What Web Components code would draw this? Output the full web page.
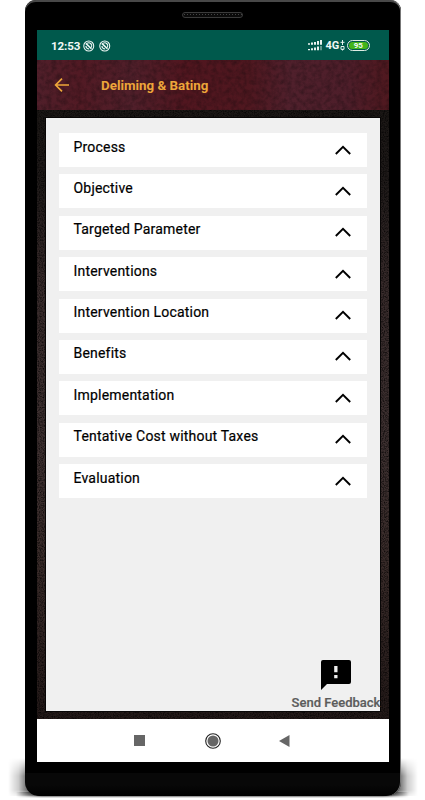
<!DOCTYPE html>
<html lang="en">
<head>
<meta charset="utf-8">
<title>Deliming &amp; Bating</title>
<style>
html,body{margin:0;height:800px;overflow:hidden;background:#fff;font-family:Roboto,"Liberation Sans",sans-serif}
</style>
</head>
<body>
<phone-frame>
  <status-bar time="12:53" battery="95"></status-bar>
  <app-bar>Deliming &amp; Bating</app-bar>
  <leather-panel>
    <topic-row>Process</topic-row>
    <topic-row>Objective</topic-row>
    <topic-row>Targeted Parameter</topic-row>
    <topic-row>Interventions</topic-row>
    <topic-row>Intervention Location</topic-row>
    <topic-row>Benefits</topic-row>
    <topic-row>Implementation</topic-row>
    <topic-row>Tentative Cost without Taxes</topic-row>
    <topic-row>Evaluation</topic-row>
    <feedback-button slot="action">Send Feedback</feedback-button>
  </leather-panel>
  <nav-bar></nav-bar>
</phone-frame>
<script>
const define = (name, html) => customElements.define(name, class extends HTMLElement {
  constructor() {
    super();
    this.attachShadow({mode: 'open'}).innerHTML =
      html.replace(/\{(\w+)\}/g, (_, key) => this.getAttribute(key) || '');
  }
});

define('phone-frame', `<style>
:host{display:block;position:relative;width:425px;height:800px;overflow:hidden}
.shade{position:absolute;top:758px;width:30px;height:38px;-webkit-mask:linear-gradient(#0000,#000 18px,#000 32px,#0004)}
.left{left:5px;background:linear-gradient(90deg,#0000 10%,#0003 45%,#0008 70%,#000)}
.right{left:391px;background:linear-gradient(270deg,#0000 10%,#0003 45%,#0008 70%,#000)}
.edge{position:absolute;left:16px;right:16px;top:792px;height:5.5px;background:linear-gradient(#111,#333 50%,#999 75%,#fff);-webkit-mask:linear-gradient(90deg,#0000,#000 26px,#000 calc(100% - 26px),#0000)}
.body{position:relative;box-sizing:border-box;margin-left:25px;width:375.5px;height:795.5px;padding:30px 11.5px 33.5px 12px;background:linear-gradient(#000 0 773px,#080808 773px 785px,#000);border-radius:11px 11px 14px 14px;box-shadow:inset -1px 0 #777,inset 0 2px #484848;display:flex;flex-direction:column}
.speaker{position:absolute;left:157px;top:12px;width:61px;height:6px;box-sizing:border-box;border:1px solid #3b3b3b;border-radius:3px;background:radial-gradient(circle,#444 0 .8px,#0a0a0a 1px) 0 0/3px 3px}
.screen{flex:1;display:flex;flex-direction:column;overflow:hidden}
</style><div class="shade left"></div><div class="shade right"></div><div class="edge"></div><div class="body"><div class="speaker"></div><div class="screen"><slot></slot></div></div>`);

define('status-bar', `<style>
:host{display:flex;align-items:center;box-sizing:border-box;height:29.5px;padding:2px 19.5px 0 14px;background:#00594c;color:#f1f8f6;font-weight:700}
.time{font-size:11.6px;letter-spacing:-.1px;line-height:14px;width:29.5px}
svg{display:block;flex:none}
.a{margin-left:2.5px}.b{margin-left:4.5px}
.sig{margin-left:auto}
.net{font-size:11px;letter-spacing:-.2px;margin-left:3.5px;line-height:14px}
.arrows{margin-left:.5px}
.bat{box-sizing:border-box;width:22.5px;height:11px;margin-left:2.5px;border:1px solid #dfece4;border-radius:6px;padding:1px}
.bat span{display:block;height:7px;border-radius:4px;background:#43b51b;font-size:8px;line-height:7.5px;text-align:center}
</style><span class="time">{time}</span>
<svg class="a" width="11.5" height="12" viewBox="0 0 12 12"><g fill="none" stroke="#f1f8f6"><circle cx="6" cy="6" r="5.2" stroke-width="1.1"/><path d="M4.3 3.1a3.3 3.3 0 0 1 4.5 4.5" stroke-width="1.2"/><path d="M3 3.3l5.8 5.6" stroke-width="1.6"/><path d="M3.1 6a3 3 0 0 0 3.3 3" stroke-width="1.3"/></g></svg>
<svg class="b" width="11.5" height="12" viewBox="0 0 12 12"><g fill="none" stroke="#f1f8f6"><circle cx="6" cy="6" r="5.2" stroke-width="1.1"/><path d="M4.3 3.1a3.3 3.3 0 0 1 4.5 4.5" stroke-width="1.2"/><path d="M3 3.3l5.8 5.6" stroke-width="1.6"/><path d="M3.1 6a3 3 0 0 0 3.3 3" stroke-width="1.3"/></g></svg>
<svg class="sig" width="14" height="11" viewBox="0 0 14 11" fill="#e9f3f0"><path d="M0 3.2h2v1.5H0zM3 2.6h2v2.1H3zM6 1.9h2v2.8H6zM9 1h2v3.7H9zM12 0h2v4.7h-2zM0 8.9h2v1.4H0zM3 8.3h2v2H3zM6 7.5h2v2.8H6zM9 6.6h2v3.7H9z"/><path opacity=".4" d="M12 6h2v4.3h-2z"/></svg>
<span class="net">4G</span>
<svg class="arrows" width="5" height="11" viewBox="0 0 5 11" fill="none" stroke="#e9f3f0"><path d="M2.5 0v5M.5 2.3h4M1 6.5h3v2.8H1zM2.5 9v1.5"/></svg>
<div class="bat"><span>{battery}</span></div>`);

define('app-bar', `<style>
:host{display:flex;align-items:center;position:relative;height:50px;box-sizing:border-box;padding-left:17px;background:linear-gradient(90deg,#501f2a,#521a24 12%,#501f2a 27%,#51161f 42%,#4f171f 60%,#50202c 72%,#4e1e2a 88%,#50181f);color:#eda63a;font-size:13.35px;font-weight:700}
.grain{position:absolute;inset:0;width:100%;height:100%}
.arrow{position:relative;flex:none}.title{position:relative;margin-left:32px;white-space:nowrap;padding-top:1px}
</style><svg class="grain"><filter id="n" color-interpolation-filters="sRGB"><feTurbulence type="fractalNoise" baseFrequency=".2" numOctaves="3" seed="4"/><feColorMatrix values="0 0 0 0 .06  0 0 0 0 .03  0 0 0 0 .04  .7 0 0 0 -.24"/></filter><rect width="100%" height="100%" filter="url(#n)"/></svg>
<svg class="arrow" width="15" height="14" viewBox="0 0 15 14" fill="none" stroke="#eda63a" stroke-width="1.7"><path d="M8 .6L1.6 7 8 13.4M2 7h13"/></svg><span class="title"><slot></slot></span>`);

define('leather-panel', `<style>
:host{display:flex;position:relative;height:609.5px;box-sizing:border-box;padding:8.5px 9px 8.5px;background:linear-gradient(#1b1715,#1f1a19 12%,#372a2a 28%,#3d3030 55%,#392b29 75%,#231918)}
.grain{position:absolute;inset:0;width:100%;height:100%}
.panel{position:relative;flex:1;display:flex;flex-direction:column;box-sizing:border-box;padding:15px 13px 0;background:#f0f0f0;box-shadow:0 0 0 1px #080606}
.list{display:flex;flex-direction:column;gap:7.4px}
.fill{flex:1}
.action{display:flex;justify-content:flex-end;margin-right:-13px}
</style><svg class="grain"><filter id="n" color-interpolation-filters="sRGB"><feTurbulence type="fractalNoise" baseFrequency=".8" numOctaves="2" seed="8"/><feColorMatrix values="0 0 0 0 0  0 0 0 0 0  0 0 0 0 0  1.6 0 0 0 -.6"/></filter><rect width="100%" height="100%" filter="url(#n)"/></svg>
<div class="panel"><div class="list"><slot></slot></div><div class="fill"></div><div class="action"><slot name="action"></slot></div></div>`);

define('topic-row', `<style>
:host{display:flex;justify-content:space-between;box-sizing:border-box;height:34px;padding:0 16px 0 14.5px;background:#fff;color:#000;font-size:14px;letter-spacing:.2px;-webkit-text-stroke:.2px #000}
span{line-height:16px;padding-top:5.5px;white-space:nowrap}
svg{margin-top:11.5px;flex:none}
</style><span><slot></slot></span><svg width="16" height="10" viewBox="0 0 16 10" fill="none" stroke="#000" stroke-width="1.9"><path d="M.8 9L8 1.8 15.2 9"/></svg>`);

define('feedback-button', `<style>
:host{display:flex;flex-direction:column;align-items:center;width:88px;height:50.5px;color:#5c5c5c;font-size:13px;font-weight:500;white-space:nowrap;-webkit-text-stroke:.2px #5c5c5c}
svg{flex:none}span{line-height:16px;margin-top:4.6px}
</style><svg width="30" height="30" viewBox="0 0 30 30"><path d="M2 0h26q2 0 2 2v20q0 2-2 2H6L0 30V2q0-2 2-2z"/><path fill="#f0f0f0" d="M13.2 6h3.3v6.3h-3.3zM13.2 15h3.3v3.2h-3.3z"/></svg><span><slot></slot></span>`);

define('nav-bar', `<style>
:host{display:flex;align-items:center;box-sizing:border-box;height:43px;background:#fff;padding-left:97px}
svg{flex:none}.home{margin-left:59.5px}.back{margin-left:58px}
</style><svg width="11" height="11"><path fill="#666" d="M0 0h11v11H0z"/></svg>
<svg class="home" width="16" height="16"><circle cx="8" cy="8" r="7.3" fill="#fff" stroke="#222" stroke-width="1.1"/><circle cx="8" cy="8" r="5.5" fill="#666"/></svg>
<svg class="back" width="11" height="12"><path fill="#666" d="M0 6L10.5 0v12z"/></svg>`);
</script>
</body>
</html>
